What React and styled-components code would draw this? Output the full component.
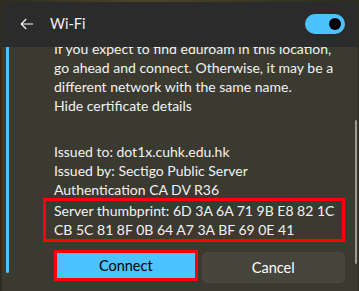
import { useLayoutEffect, useRef } from 'react';
import styled, { createGlobalStyle } from 'styled-components';

const GlobalStyle = createGlobalStyle`
    html, body{
        margin: 0;
        padding: 0;
        width: 359px;
        height: 291px;
        overflow: hidden;
        background: linear-gradient(90deg, #2e2c22 0%, #4a4528 40%, #3a3824 70%, #2c2b22 100%);
        font-family: "Segoe UI", Lato, "Noto Sans", sans-serif;
    }
    *{ box-sizing: border-box; }
`

const Panel = styled.div`
    display: flex;
    flex-direction: column;
    margin: 2px 1px 0 2px;
    height: 289px;
    border-radius: 8px 8px 0 0;
    overflow: hidden;
    background-color: #3a3a31;
    color: #f2f2f2;
`

const Header = styled.header`
    display: flex;
    align-items: center;
    height: 45px;
    padding: 0 13px 1px 16px;
    background-color: #2b2b2b;
    flex-shrink: 0;
`

const BackButton = styled.button`
    display: flex;
    align-items: center;
    justify-content: center;
    width: 18px;
    height: 18px;
    padding: 0;
    margin: 0 14px 0 0;
    border: none;
    background: none;
    color: #ffffff;
`

const Title = styled.span`
    flex: 1;
    font-size: 14.5px;
    line-height: 20px;
`

const Toggle = styled.div`
    display: flex;
    align-items: center;
    justify-content: flex-end;
    width: 40px;
    height: 20px;
    padding-right: 4px;
    border-radius: 10px;
    background-color: #4cc2ff;
    &::after{
        content: '';
        width: 12px;
        height: 12px;
        border-radius: 50%;
        background-color: #000000;
    }
`

const ScrollArea = styled.div`
    position: relative;
    flex: 1;
    overflow: hidden;
`

const ScrollThumb = styled.div`
    position: absolute;
    right: 1px;
    top: 100px;
    bottom: 0;
    width: 2px;
    border-radius: 1px;
    background-color: #9a9a8e;
`

const Item = styled.div`
    display: flex;
    padding: 0 13px 9px 4px;
`

const Indicator = styled.div`
    flex-shrink: 0;
    width: 3px;
    margin-bottom: 10px;
    border-radius: 2px;
    background-color: #4cc2ff;
`

const Body = styled.div`
    flex: 1;
    display: flex;
    flex-direction: column;
    padding-left: 45px;
    font-size: 14px;
    line-height: 19px;
`

const Text = styled.p`
    margin: 0 0 ${props => props.$gap || 0}px;
`

const Highlight = styled.div`
    margin: -1px 0 8px -11px;
    padding: 0 0 0 8px;
    border: 3px solid #ff0000;
`

const Buttons = styled.div`
    display: grid;
    grid-template-columns: 1fr 1fr;
    gap: 4px;
    align-items: start;
`

const Button = styled.button`
    height: 31px;
    margin-top: ${props => props.$primary ? '0' : '2px'};
    border: ${props => props.$primary ? '3px solid #ff0000' : '1px solid #48483e'};
    border-radius: ${props => props.$primary ? '0' : '5px'};
    background-color: ${props => props.$primary ? '#4cc2ff' : '#45453b'};
    color: ${props => props.$primary ? '#000000' : '#ffffff'};
    font-family: inherit;
    font-size: 14.5px;
    padding: 0;
`

export default function App(){
    const areaRef = useRef(null);
    const firstRef = useRef(null);

    useLayoutEffect(() => {
        if(areaRef.current && firstRef.current){
            areaRef.current.scrollTop = firstRef.current.offsetTop + 8;
        }
    }, []);

    return(
        <>
            <GlobalStyle />
            <Panel>
                <Header>
                    <BackButton aria-label='Back'>
                        <svg width='14' height='12' viewBox='0 0 14 12' fill='none' stroke='currentColor' strokeWidth='1.1'>
                            <path d='M13 6H1.2M6.2 1L1.2 6l5 5' />
                        </svg>
                    </BackButton>
                    <Title>Wi-Fi</Title>
                    <Toggle />
                </Header>
                <ScrollArea ref={areaRef}>
                    <Item>
                        <Indicator />
                        <Body>
                            <Text>Continue connecting?</Text>
                            <Text ref={firstRef}>
                                If you expect to find eduroam in this location, go ahead and connect. Otherwise, it may be a different network with the same name.
                            </Text>
                            <Text $gap={27}>Hide certificate details</Text>
                            <Text>Issued to: dot1x.cuhk.edu.hk</Text>
                            <Text>Issued by: Sectigo Public Server<br />Authentication CA DV R36</Text>
                            <Highlight>
                                Server thumbprint: 6D 3A 6A 71 9B E8 82 1C CB 5C 81 8F 0B 64 A7 3A BF 69 0E 41
                            </Highlight>
                            <Buttons>
                                <Button $primary>Connect</Button>
                                <Button>Cancel</Button>
                            </Buttons>
                        </Body>
                    </Item>
                    <ScrollThumb />
                </ScrollArea>
            </Panel>
        </>
    )
}
